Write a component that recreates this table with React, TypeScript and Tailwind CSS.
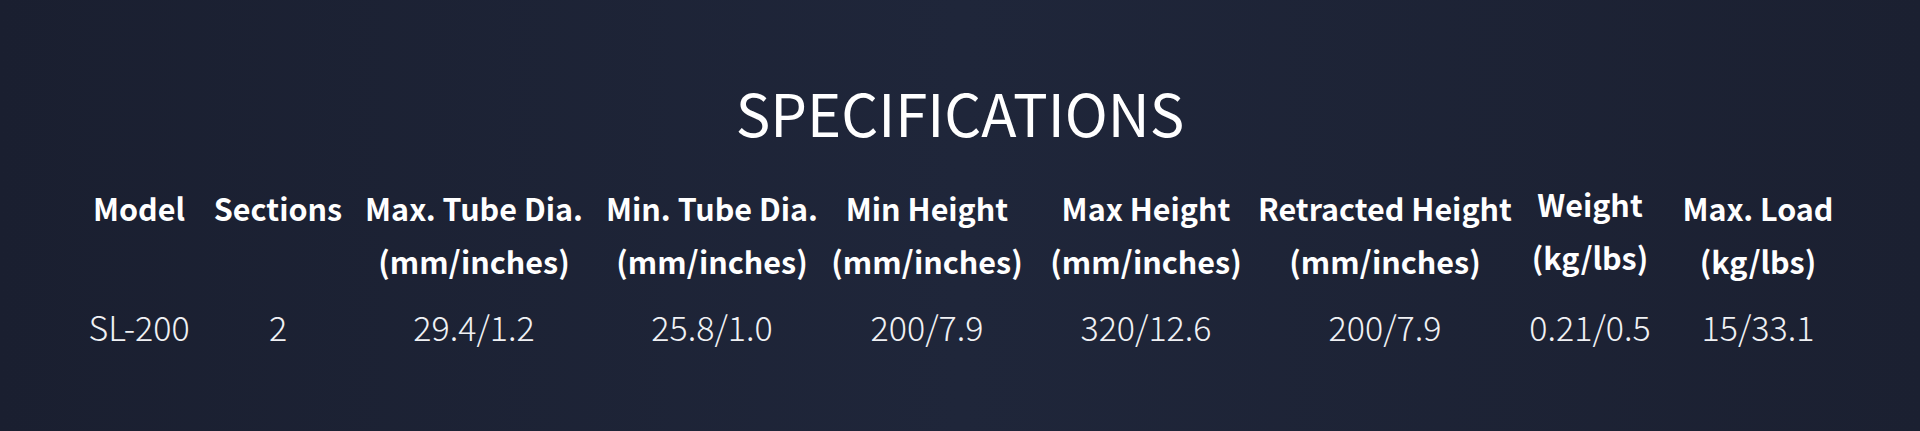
const columns = [
  { title: "Model", unit: "", value: "SL-200" },
  { title: "Sections", unit: "", value: "2" },
  { title: "Max. Tube Dia.", unit: "(mm/inches)", value: "29.4/1.2" },
  { title: "Min. Tube Dia.", unit: "(mm/inches)", value: "25.8/1.0" },
  { title: "Min Height", unit: "(mm/inches)", value: "200/7.9" },
  { title: "Max Height", unit: "(mm/inches)", value: "320/12.6" },
  { title: "Retracted Height", unit: "(mm/inches)", value: "200/7.9" },
  { title: "Weight", unit: "(kg/lbs)", value: "0.21/0.5" },
  { title: "Max. Load", unit: "(kg/lbs)", value: "15/33.1" },
];

export default function App() {
  return (
    <div
      className="min-h-[431px] w-full bg-gradient-to-r from-[#1a1f30] via-[#1f263a] to-[#1b2031] text-white pt-[83px]"
      style={{ fontFamily: '"Noto Sans CJK SC", "Noto Sans", sans-serif' }}
    >
      <h2 className="text-center text-[58px] leading-[58px] font-normal">SPECIFICATIONS</h2>

      <div className="ml-[71px] mt-[41px] w-[1772px] grid grid-cols-[136px_142px_250px_226px_204px_234px_244px_166px_170px]">
        {columns.map((c) => (
          <div
            key={c.title}
            className={`flex flex-col items-center whitespace-nowrap text-[30.5px] leading-[53px] font-bold ${
              c.title === "Weight" ? "-mt-1" : ""
            }`}
          >
            <span>{c.title}</span>
            {c.unit && <span>{c.unit}</span>}
          </div>
        ))}
      </div>

      <div className="ml-[71px] mt-[19px] w-[1772px] grid grid-cols-[136px_142px_250px_226px_204px_234px_244px_166px_170px]">
        {columns.map((c) => (
          <div
            key={c.title}
            className="flex justify-center whitespace-nowrap text-[34px] leading-[40px] font-light text-[#f0f1f4]"
          >
            {c.value}
          </div>
        ))}
      </div>
    </div>
  );
}
